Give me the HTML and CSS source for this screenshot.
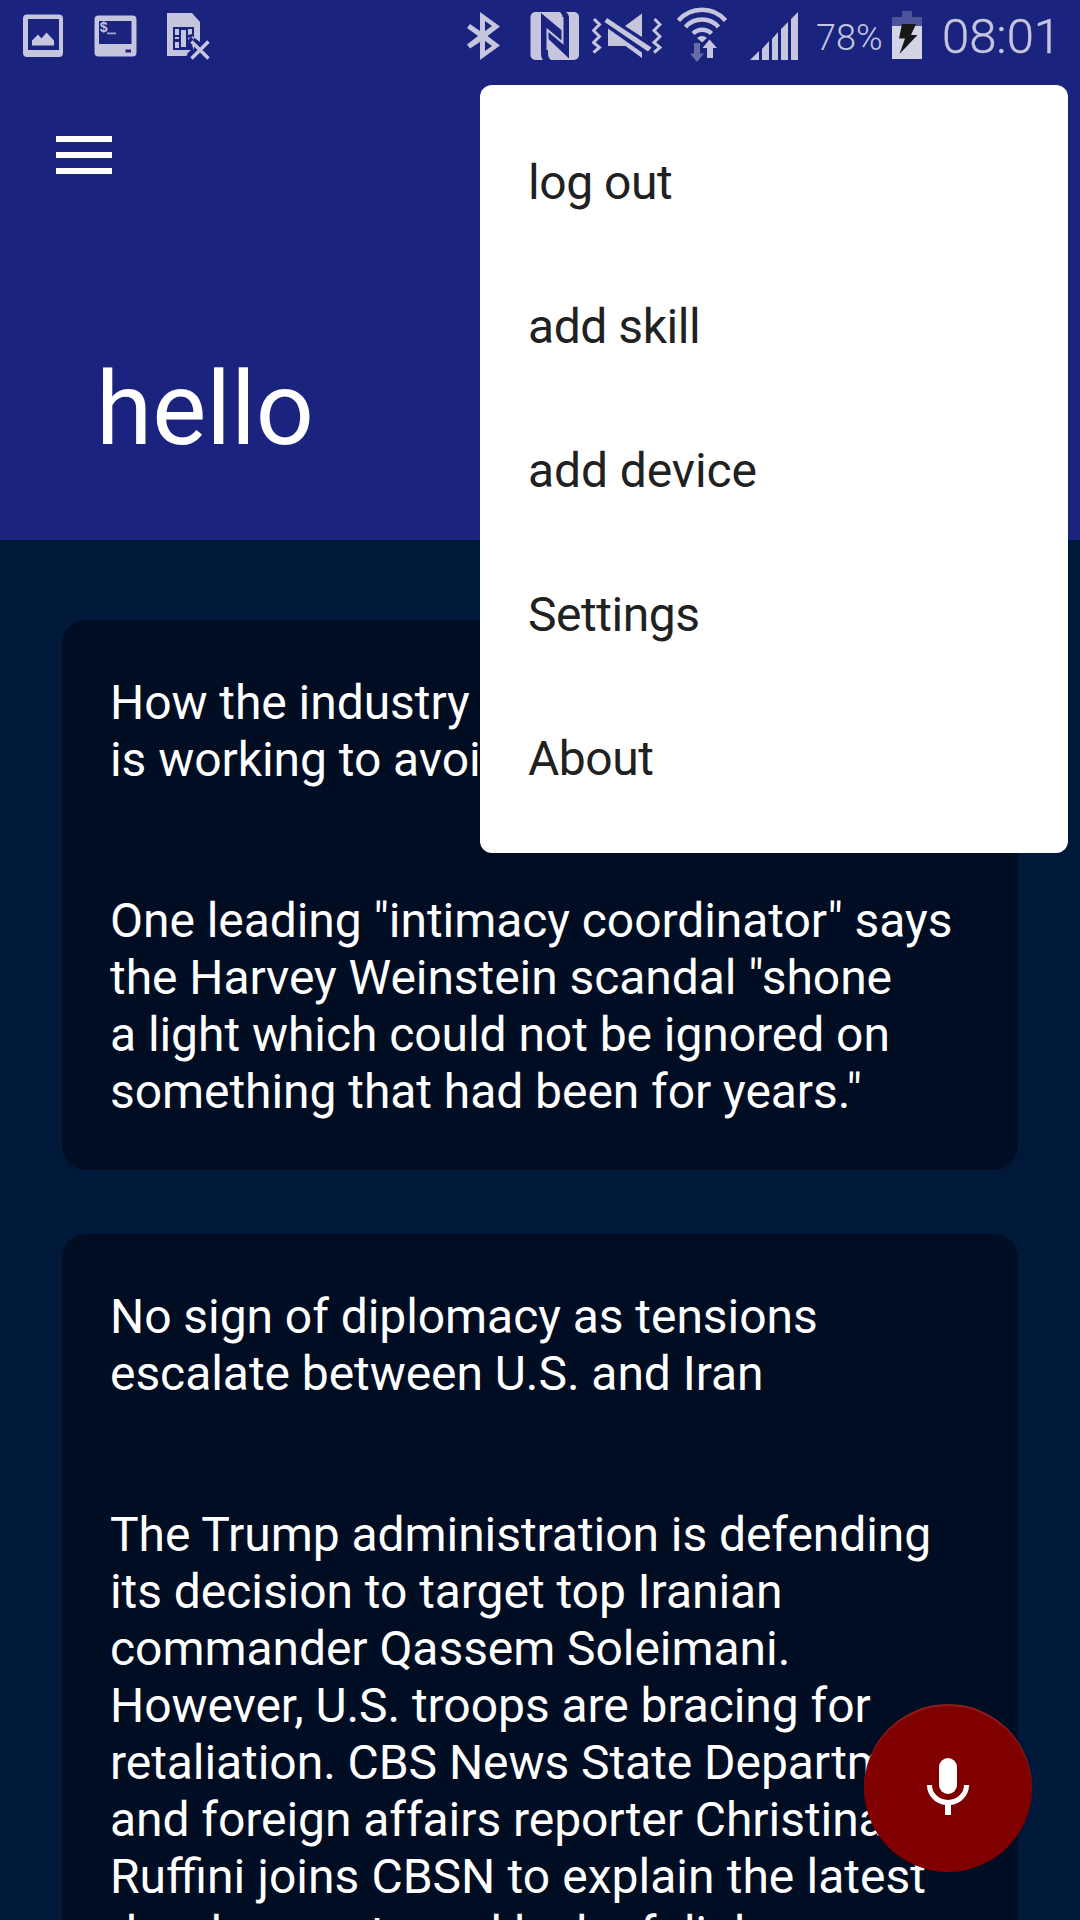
FILE: index.html
```html
<!DOCTYPE html>
<html lang="en">
<head>
<meta charset="utf-8">
<title>hello</title>
<link rel="stylesheet" href="styles.css">
</head>
<body>
<div class="screen">
  <header class="app-header">
    <div class="status-bar">
      <div class="notifications">
        <svg width="40" height="72" viewBox="23 0 40 72"><path fill-rule="evenodd" d="M27 14.500h32q4 0 4 4v34.500q0 4-4 4H27q-4 0-4-4V18.500q0-4 4-4zM28 19v31h31V19z"/><path d="M32 45.500v-5l6-6 3.500 4 5-6 7.500 8v5z"/></svg>
        <svg width="43" height="72" viewBox="94 0 43 72"><path fill-rule="evenodd" d="M98.500 15.500h34q4 0 4 4v33q0 4-4 4h-34q-4 0-4-4v-33q0-4 4-4zM99 21v23h32.500V21zM125.500 49.500v3h5.500v-3z"/><text class="prompt" x="99.500" y="32">$</text><path opacity=".8" d="M107 32.500h9v1.800h-9z"/></svg>
        <svg width="43" height="72" viewBox="167 0 43 72"><path fill-rule="evenodd" d="M167 13h25l8 9v20l-8-6-2 5 4 9-8 6h-19zM173 27v23h21V27z"/><path d="M175 29h4v6h-4zM181 30h5v17h-5zM188 29h4v5l-4 1zM175 37h4v2h-4zM175 42h4v6h-4zM188 38l3-1-3 4z"/><path fill="none" stroke="#1a237e" stroke-width="6" d="M189 39l5 5M189 56l5-5"/><path class="line" stroke-width="3.500" d="M191.500 41.500l17 17M208.500 41.500l-17 17"/></svg>
      </div>
      <div class="indicators">
        <svg class="bluetooth" width="34" height="72" viewBox="467 0 34 72"><path fill-rule="evenodd" d="M480 12l20 14.500-12.500 9.500L500 45.500 480 60V42l-10 6.500-3-4L478 36l-11-8 3-4 10 7zM485 21v10l7-5zM485 41v10l7-5z"/></svg>
        <svg class="nfc" width="50" height="72" viewBox="530 0 50 72"><rect x="530.500" y="12" width="48.500" height="48" rx="5"/><path fill="#1a237e" d="M541 13l21.500 18V18q0-4-2.500-6h6q3 2 3 6v40.500L548 38.500V53q0 5 3 7h-8q-2-2-2-7z"/><path class="line" stroke-width="2" d="M547.500 50V30l15 12.500V17"/></svg>
        <svg class="mute" width="70" height="72" viewBox="592 0 70 72"><path class="line" stroke-width="3" d="M594 19l5.500 5.500-6 6 6 6-6 6 6 5-6 5M654.500 19l5.500 5.500-6 6 6 6-6 6 6 5-6 5"/><path d="M607 18l44.500 29.500-3.500 4L604.500 22zM642 13.500V37l-17-11zM608 28.500l34 24V58l-16.500-12H608z"/></svg>
        <svg class="wifi" width="50" height="72" viewBox="677 0 50 72"><path class="line" stroke-width="4.500" d="M678.500 20.500a31 31 0 0 1 47 0M685.500 27a22 22 0 0 1 33 0M693 33.500a13 13 0 0 1 18.500 0"/><path d="M702 42.500l-5-4.500q5-4 10 0z"/><path opacity=".45" d="M694 43h6v10.500h4l-7 8.500-7-8.500h4z"/><path stroke="#1a237e" stroke-width="1.500" paint-order="stroke" d="M709.500 39.500l7.500 8.500h-4v10h-6V48h-4.500z"/></svg>
        <svg class="signal" width="48" height="72" viewBox="750 0 48 72"><path d="M750 60l9-9v9zM762 60V49l7-8v19zM772 60V39l6-7v28zM781 60V29l7-7v38zM791 60V19l7-7v48z"/></svg>
        <span class="battery-level">78%</span>
        <svg class="battery" width="30" height="72" viewBox="892 0 30 72"><path opacity=".3" d="M902 11h10v6h10v9h-30v-9h10z"/><path fill="#d4d4e7" d="M892 26h30v33h-30z"/><path fill="#171717" d="M902 24h14l-5 11h6.500L899.500 54l5.500-15.500h-6z"/></svg>
        <span class="clock">08:01</span>
      </div>
    </div>
    <svg class="menu-button" width="56" height="38" viewBox="0 0 56 38"><path d="M0 0h56v6H0zM0 16h56v6H0zM0 32h56v6H0z"/></svg>
    <h1 class="title">hello</h1>
  </header>

  <main class="feed">
    <article class="card">
      <h2>How the industry<br>is working to avoid</h2>
      <p>One leading "intimacy coordinator" says<br>the Harvey Weinstein scandal "shone<br>a light which could not be ignored on<br>something that had been for years."</p>
    </article>
    <article class="card">
      <h2>No sign of diplomacy as tensions<br>escalate between U.S. and Iran</h2>
      <p>The Trump administration is defending<br>its decision to target top Iranian<br>commander Qassem Soleimani.<br>However, U.S. troops are bracing for<br>retaliation. CBS News State Department<br>and foreign affairs reporter Christina<br><span class="wide">Ruffini joins CBSN to explain the latest</span><br>developments and lack of diplomacy.</p>
    </article>
  </main>

  <button class="mic-button" aria-label="Speak">
    <svg width="42" height="57" viewBox="0 0 42 57"><rect x="12" width="18" height="36" rx="9"/><path d="M0 27h5a16 15 0 0 0 32 0h5a21 20 0 0 1-18 20v10h-6V47A21 20 0 0 1 0 27z"/></svg>
  </button>

  <nav class="popup">
    <a>log out</a>
    <a>add skill</a>
    <a class="wide">add device</a>
    <a>Settings</a>
    <a>About</a>
  </nav>
</div>
</body>
</html>
```
FILE: styles.css
```css
* { box-sizing: border-box; }

body {
  margin: 0;
  font-family: Roboto, "Liberation Sans", sans-serif;
}

.screen {
  position: relative;
  width: 1080px;
  height: 1920px;
  overflow: hidden;
  background: #001839;
}

.app-header {
  height: 540px;
  background: #1a237e;
}

.status-bar {
  display: flex;
  justify-content: space-between;
  height: 72px;
  padding: 0 28px 0 23px;
  color: #c5c5de;
  font-weight: 300;
}

.status-bar svg {
  display: block;
  flex: none;
  fill: #c5c5de;
}

.status-bar .line {
  fill: none;
  stroke: #c5c5de;
}

.prompt {
  font: bold 14px "Liberation Mono", monospace;
}

.notifications { display: flex; gap: 31px; }
.notifications svg:last-child { margin-left: -1px; }

.indicators { display: flex; }
.nfc { margin-left: 29px; }
.mute { margin-left: 12px; }
.wifi { margin-left: 15px; }
.signal { margin-left: 23px; }

.battery-level {
  width: 66px;
  margin-left: 18px;
  font-size: 36px;
  line-height: 76px;
}

.battery { margin-left: 10px; }

.clock {
  width: 110px;
  margin-left: 20px;
  font-size: 49px;
  line-height: 74px;
  white-space: nowrap;
  -webkit-text-stroke: 0.4px #c5c5de;
}

.menu-button {
  display: block;
  margin: 64px 0 0 56px;
  fill: #fff;
}

.title {
  margin: 175px 0 0 96px;
  color: #fff;
  font-size: 102px;
  font-weight: 400;
  line-height: 120px;
}

.feed {
  display: flex;
  flex-direction: column;
  gap: 64px;
  padding: 80px 62px 0;
}

.card {
  padding: 54px 48px 50px;
  border-radius: 24px;
  background: #000d22;
  color: #fff;
  font-size: 48px;
  letter-spacing: -0.06px;
  font-variant-ligatures: common-ligatures;
  line-height: 57px;
  white-space: nowrap;
}

.card h2 {
  margin: 0 0 104px;
  font: inherit;
}

.card p { margin: 0; }

.card .wide { letter-spacing: 0; word-spacing: 0.3px; }

.mic-button {
  position: absolute;
  left: 864px;
  top: 1704px;
  display: flex;
  justify-content: center;
  width: 168px;
  height: 168px;
  padding: 54px 0 0;
  border: 0;
  border-radius: 50%;
  background: #800000;
  box-shadow: inset 0 2px 1px rgba(255, 255, 255, .12);
}

.mic-button svg { fill: #fff; }

.popup {
  position: absolute;
  left: 480px;
  top: 85px;
  display: flex;
  flex-direction: column;
  width: 588px;
  padding: 24px 0;
  border-radius: 12px;
  background: #fff;
}

.popup a {
  height: 144px;
  padding-left: 48px;
  color: #212121;
  font-size: 48px;
  letter-spacing: -0.45px;
  line-height: 148px;
}

.popup .wide { letter-spacing: -0.1px; }
```
